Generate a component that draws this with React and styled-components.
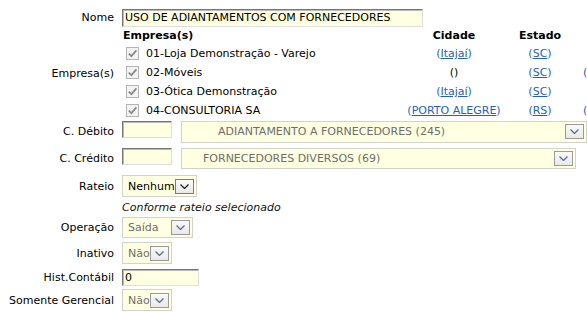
import { Fragment } from "react";
import styled, { createGlobalStyle } from "styled-components";

const GlobalStyle = createGlobalStyle`
  html, body {
    margin: 0;
    padding: 0;
    background: #fff;
    overflow: hidden;
  }
  body {
    font-family: "DejaVu Sans", Verdana, sans-serif;
    font-size: 11px;
    color: #000;
  }
`;

const Form = styled.form`
  display: flex;
  flex-direction: column;
  padding-top: 8px;
  width: 587px;
`;

const Row = styled.div`
  display: flex;
  align-items: center;
  height: ${(p) => p.$h}px;
`;

const Label = styled.label`
  flex: none;
  width: 114px;
  margin-right: 8px;
  text-align: right;
  white-space: nowrap;
`;

const Field = styled.div`
  display: flex;
  align-items: flex-start;
  gap: ${(p) => p.$gap || 0}px;
`;

const TextInput = styled.input`
  box-sizing: border-box;
  width: ${(p) => p.$w}px;
  height: ${(p) => p.$hgt || 18}px;
  margin: 0;
  padding: 0 2px;
  font-family: "DejaVu Sans", Verdana, sans-serif;
  font-size: 11px;
  color: #000;
  background: #ffffe1;
  border: 1px solid;
  border-color: #767676 #dedede #dedede #767676;
  box-shadow: inset 1px 1px 0 #b9b9b9;
  outline: none;
`;

const SelectBox = styled.div`
  box-sizing: border-box;
  flex: none;
  display: flex;
  align-items: center;
  width: ${(p) => p.$w}px;
  height: ${(p) => p.$hgt || 22}px;
  padding: 0 2px 0 ${(p) => p.$indent || 5}px;
  background: #ffffe1;
  border: 1px solid #d2d2c8;
  color: ${(p) => (p.$disabled ? "#6e6e6e" : "#000")};
  white-space: nowrap;
`;

const SelectText = styled.span`
  flex: 1;
  overflow: hidden;
`;

const ArrowButton = styled.span`
  box-sizing: border-box;
  flex: none;
  display: flex;
  align-items: center;
  justify-content: center;
  width: 19px;
  height: 15px;
  border: 1px solid ${(p) => (p.$disabled ? "#9a9a9a" : "#7d7d7d")};
  background: linear-gradient(#fafafa, #e9e9e9);
`;

const Note = styled.div`
  font-style: italic;
  color: #111;
`;

const CompanyGrid = styled.div`
  display: grid;
  grid-template-columns: 283px 98px 74px 10px;
  grid-template-rows: 17px repeat(4, 19px);
  align-items: center;
`;

const HeadCell = styled.div`
  font-weight: bold;
  text-align: ${(p) => p.$align || "center"};
  padding-left: ${(p) => (p.$align === "left" ? 1 : 0)}px;
  white-space: nowrap;
`;

const Cell = styled.div`
  display: flex;
  align-items: center;
  justify-content: ${(p) => p.$justify || "center"};
  padding-left: ${(p) => p.$pl || 0}px;
  white-space: nowrap;
`;

const CheckBox = styled.span`
  box-sizing: border-box;
  display: inline-flex;
  align-items: center;
  justify-content: center;
  width: 13px;
  height: 13px;
  margin: 0 7px 0 4px;
  border: 1px solid #b4b4b4;
  background: #f3f3f3;
`;

const Paren = styled.span`
  color: ${(p) => p.$color || "#2461bf"};
`;

const Link = styled.a`
  color: #2461bf;
  text-decoration: underline;
`;

const Chevron = ({ disabled }) => (
  <svg width="9" height="5" viewBox="0 0 9 5">
    <polyline
      points="0.5,0.5 4.5,4.5 8.5,0.5"
      fill="none"
      stroke={disabled ? "#5a6f8a" : "#222"}
      strokeWidth="1.3"
    />
  </svg>
);

const Select = ({ w, hgt, indent, disabled, children }) => (
  <SelectBox $w={w} $hgt={hgt} $indent={indent} $disabled={disabled}>
    <SelectText>{children}</SelectText>
    <ArrowButton $disabled={disabled}>
      <Chevron disabled={disabled} />
    </ArrowButton>
  </SelectBox>
);

const Check = () => (
  <CheckBox>
    <svg width="11" height="11" viewBox="0 0 11 11">
      <polyline
        points="1.8,5.6 4.4,8.2 9.4,2.4"
        fill="none"
        stroke="#8a8a8a"
        strokeWidth="1.8"
      />
    </svg>
  </CheckBox>
);

const LinkParen = ({ children }) => (
  <span>
    <Paren>(</Paren>
    <Link href="#">{children}</Link>
    <Paren>)</Paren>
  </span>
);

const companies = [
  { name: "01-Loja Demonstração - Varejo", city: "Itajaí", uf: "SC" },
  { name: "02-Móveis", city: "", uf: "SC", extra: true },
  { name: "03-Ótica Demonstração", city: "Itajaí", uf: "SC" },
  { name: "04-CONSULTORIA SA", city: "PORTO ALEGRE", uf: "RS", extra: true },
];

const App = () => {
  return (
    <>
      <GlobalStyle />
      <Form>
        <Row $h={19}>
          <Label>Nome</Label>
          <TextInput $w={301} readOnly value="USO DE ADIANTAMENTOS COM FORNECEDORES" />
        </Row>

        <Row $h={93}>
          <Label>Empresa(s)</Label>
          <CompanyGrid>
            <HeadCell $align="left">Empresa(s)</HeadCell>
            <HeadCell>Cidade</HeadCell>
            <HeadCell>Estado</HeadCell>
            <div />
            {companies.map((c) => (
              <Fragment key={c.name}>
                <Cell $justify="flex-start">
                  <Check />
                  {c.name}
                </Cell>
                <Cell>
                  {c.city ? <LinkParen>{c.city}</LinkParen> : <Paren $color="#000">()</Paren>}
                </Cell>
                <Cell>
                  <LinkParen>{c.uf}</LinkParen>
                </Cell>
                <Cell $justify="flex-start" $pl={6}>
                  {c.extra ? <Paren>(</Paren> : null}
                </Cell>
              </Fragment>
            ))}
          </CompanyGrid>
        </Row>

        <Row $h={23}>
          <Label>C. Débito</Label>
          <Field $gap={9}>
            <TextInput $w={50} $hgt={17} readOnly value="" />
            <Select w={406} indent={36} disabled>
              ADIANTAMENTO A FORNECEDORES (245)
            </Select>
          </Field>
        </Row>

        <Row $h={30}>
          <Label>C. Crédito</Label>
          <Field $gap={9}>
            <TextInput $w={50} $hgt={17} readOnly value="" />
            <Select w={395} hgt={21} indent={21} disabled>
              FORNECEDORES DIVERSOS (69)
            </Select>
          </Field>
        </Row>

        <Row $h={26}>
          <Label>Rateio</Label>
          <Select w={75}>Nenhum</Select>
        </Row>

        <Row $h={16}>
          <Label />
          <Note>Conforme rateio selecionado</Note>
        </Row>

        <Row $h={24}>
          <Label>Operação</Label>
          <Select w={71} hgt={21} disabled>
            Saída
          </Select>
        </Row>

        <Row $h={28}>
          <Label>Inativo</Label>
          <Select w={50} disabled>
            Não
          </Select>
        </Row>

        <Row $h={20}>
          <Label>Hist.Contábil</Label>
          <TextInput $w={77} $hgt={17} readOnly value="0" />
        </Row>

        <Row $h={26}>
          <Label>Somente Gerencial</Label>
          <Select w={50} disabled>
            Não
          </Select>
        </Row>
      </Form>
    </>
  );
};

export default App;
